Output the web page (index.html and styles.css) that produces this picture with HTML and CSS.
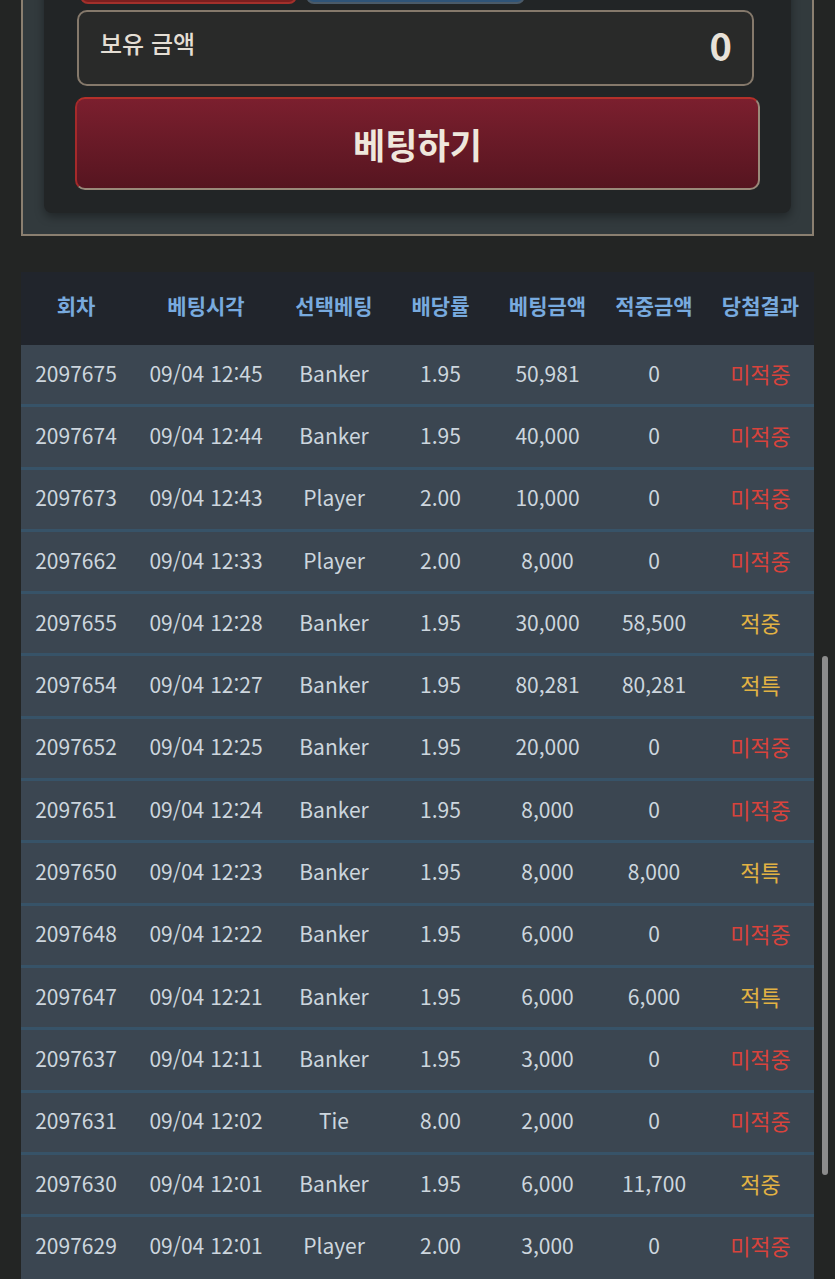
FILE: index.html
```html
<!DOCTYPE html>
<html lang="ko">
<head>
    <meta charset="UTF-8">
    <meta name="viewport" content="width=device-width, initial-scale=1.0">
    <title>베팅내역</title>
    <link rel="stylesheet" href="styles.css">
</head>
<body>
    <div class="bet-wrap">
        <div class="bet-panel">
            <div class="pick-row">
                <button class="pick pick-banker"></button>
                <button class="pick pick-player"></button>
            </div>
            <div class="balance">
                <span class="balance-label">보유 금액</span>
                <span class="balance-value">0</span>
            </div>
            <button class="bet-btn">베팅하기</button>
        </div>
    </div>

    <table class="history">
        <colgroup>
            <col style="width:110px">
            <col style="width:150px">
            <col style="width:106px">
            <col style="width:107px">
            <col style="width:107px">
            <col style="width:106px">
            <col style="width:107px">
        </colgroup>
        <thead>
            <tr>
                <th>회차</th>
                <th>베팅시각</th>
                <th>선택베팅</th>
                <th>배당률</th>
                <th>베팅금액</th>
                <th>적중금액</th>
                <th>당첨결과</th>
            </tr>
        </thead>
        <tbody>
            <tr><td>2097675</td><td>09/04 12:45</td><td>Banker</td><td>1.95</td><td>50,981</td><td>0</td><td class="lose">미적중</td></tr>
            <tr><td>2097674</td><td>09/04 12:44</td><td>Banker</td><td>1.95</td><td>40,000</td><td>0</td><td class="lose">미적중</td></tr>
            <tr><td>2097673</td><td>09/04 12:43</td><td>Player</td><td>2.00</td><td>10,000</td><td>0</td><td class="lose">미적중</td></tr>
            <tr><td>2097662</td><td>09/04 12:33</td><td>Player</td><td>2.00</td><td>8,000</td><td>0</td><td class="lose">미적중</td></tr>
            <tr><td>2097655</td><td>09/04 12:28</td><td>Banker</td><td>1.95</td><td>30,000</td><td>58,500</td><td class="win">적중</td></tr>
            <tr><td>2097654</td><td>09/04 12:27</td><td>Banker</td><td>1.95</td><td>80,281</td><td>80,281</td><td class="win">적특</td></tr>
            <tr><td>2097652</td><td>09/04 12:25</td><td>Banker</td><td>1.95</td><td>20,000</td><td>0</td><td class="lose">미적중</td></tr>
            <tr><td>2097651</td><td>09/04 12:24</td><td>Banker</td><td>1.95</td><td>8,000</td><td>0</td><td class="lose">미적중</td></tr>
            <tr><td>2097650</td><td>09/04 12:23</td><td>Banker</td><td>1.95</td><td>8,000</td><td>8,000</td><td class="win">적특</td></tr>
            <tr><td>2097648</td><td>09/04 12:22</td><td>Banker</td><td>1.95</td><td>6,000</td><td>0</td><td class="lose">미적중</td></tr>
            <tr><td>2097647</td><td>09/04 12:21</td><td>Banker</td><td>1.95</td><td>6,000</td><td>6,000</td><td class="win">적특</td></tr>
            <tr><td>2097637</td><td>09/04 12:11</td><td>Banker</td><td>1.95</td><td>3,000</td><td>0</td><td class="lose">미적중</td></tr>
            <tr><td>2097631</td><td>09/04 12:02</td><td>Tie</td><td>8.00</td><td>2,000</td><td>0</td><td class="lose">미적중</td></tr>
            <tr><td>2097630</td><td>09/04 12:01</td><td>Banker</td><td>1.95</td><td>6,000</td><td>11,700</td><td class="win">적중</td></tr>
            <tr class="last"><td>2097629</td><td>09/04 12:01</td><td>Player</td><td>2.00</td><td>3,000</td><td>0</td><td class="lose">미적중</td></tr>
        </tbody>
    </table>

    <div class="scroll-thumb"></div>
</body>
</html>
```

FILE: styles.css
```css
body {
    margin: 0;
    padding: 0 21px;
    background-color: #232524;
    font-family: "Noto Sans CJK KR", "Noto Sans", sans-serif;
    overflow: hidden;
}
.bet-wrap {
    margin-top: -99px;
    padding: 21px;
    background: #323a3d;
    border: 2px solid #8a7f70;
}
.bet-panel {
    padding: 20px 37px 23px 33px;
    background: #222526;
    border-radius: 8px;
    box-shadow: 0px 4px 10px rgba(0,0,0,0.35);
}
.pick-row {
    display: flex;
    gap: 9px;
    margin-left: 3px;
    height: 60px;
}
.pick {
    width: 217px;
    height: 60px;
    border-radius: 8px;
    border: 2px solid #8a7f70;
}
.pick-banker {
    background: #7a1f1f;
    border-color: #a2302b;
}
.pick-player {
    width: 219px;
    background: #2f5478;
    border-color: #4a5a68;
}
.balance {
    display: flex;
    justify-content: space-between;
    align-items: flex-start;
    margin-top: 6px;
    height: 76px;
    box-sizing: border-box;
    padding: 12px 20px 0 21px;
    background: #292a29;
    border: 2px solid #85796b;
    border-radius: 10px;
}
.balance-label {
    color: #e4ded4;
    font-size: 24px;
    font-weight: 500;
    line-height: 38px;
}
.balance-value {
    color: #e8e2d8;
    font-size: 38px;
    font-weight: 700;
    line-height: 42px;
}
.bet-btn {
    display: block;
    width: calc(100% + 8px);
    margin: 11px -6px 0 -2px;
    height: 93px;
    border-radius: 10px;
    border: 2px solid #9a8a7a;
    border-top-color: #b3302a;
    border-left-color: #a52a2a;
    background: linear-gradient(#7b1f2e, #561520);
    color: #efe7dc;
    font-family: inherit;
    font-size: 35px;
    font-weight: 700;
    cursor: pointer;
}
.history {
    width: 100%;
    margin-top: 36px;
    border-collapse: collapse;
    table-layout: fixed;
}
.history th {
    height: 65px;
    padding: 0 0 8px;
    background: #21252c;
    color: #78aade;
    font-size: 21px;
    font-weight: 700;
}
.history td {
    height: 55.3px;
    padding: 0 0 4px;
    background: #3b4651;
    border-bottom: 3px solid #375368;
    color: #cdd6de;
    font-size: 21px;
    font-weight: 400;
    text-align: center;
}
.history tr.last td {
    border-bottom-color: #3b4651;
}
.history td.lose {
    color: #d8433c;
    font-size: 22px;
}
.history td.win {
    color: #e2b243;
    font-size: 22px;
}
.scroll-thumb {
    position: fixed;
    left: 822px;
    top: 656px;
    width: 6px;
    height: 519px;
    border-radius: 3px;
    background: #8c8c8c;
}
```
